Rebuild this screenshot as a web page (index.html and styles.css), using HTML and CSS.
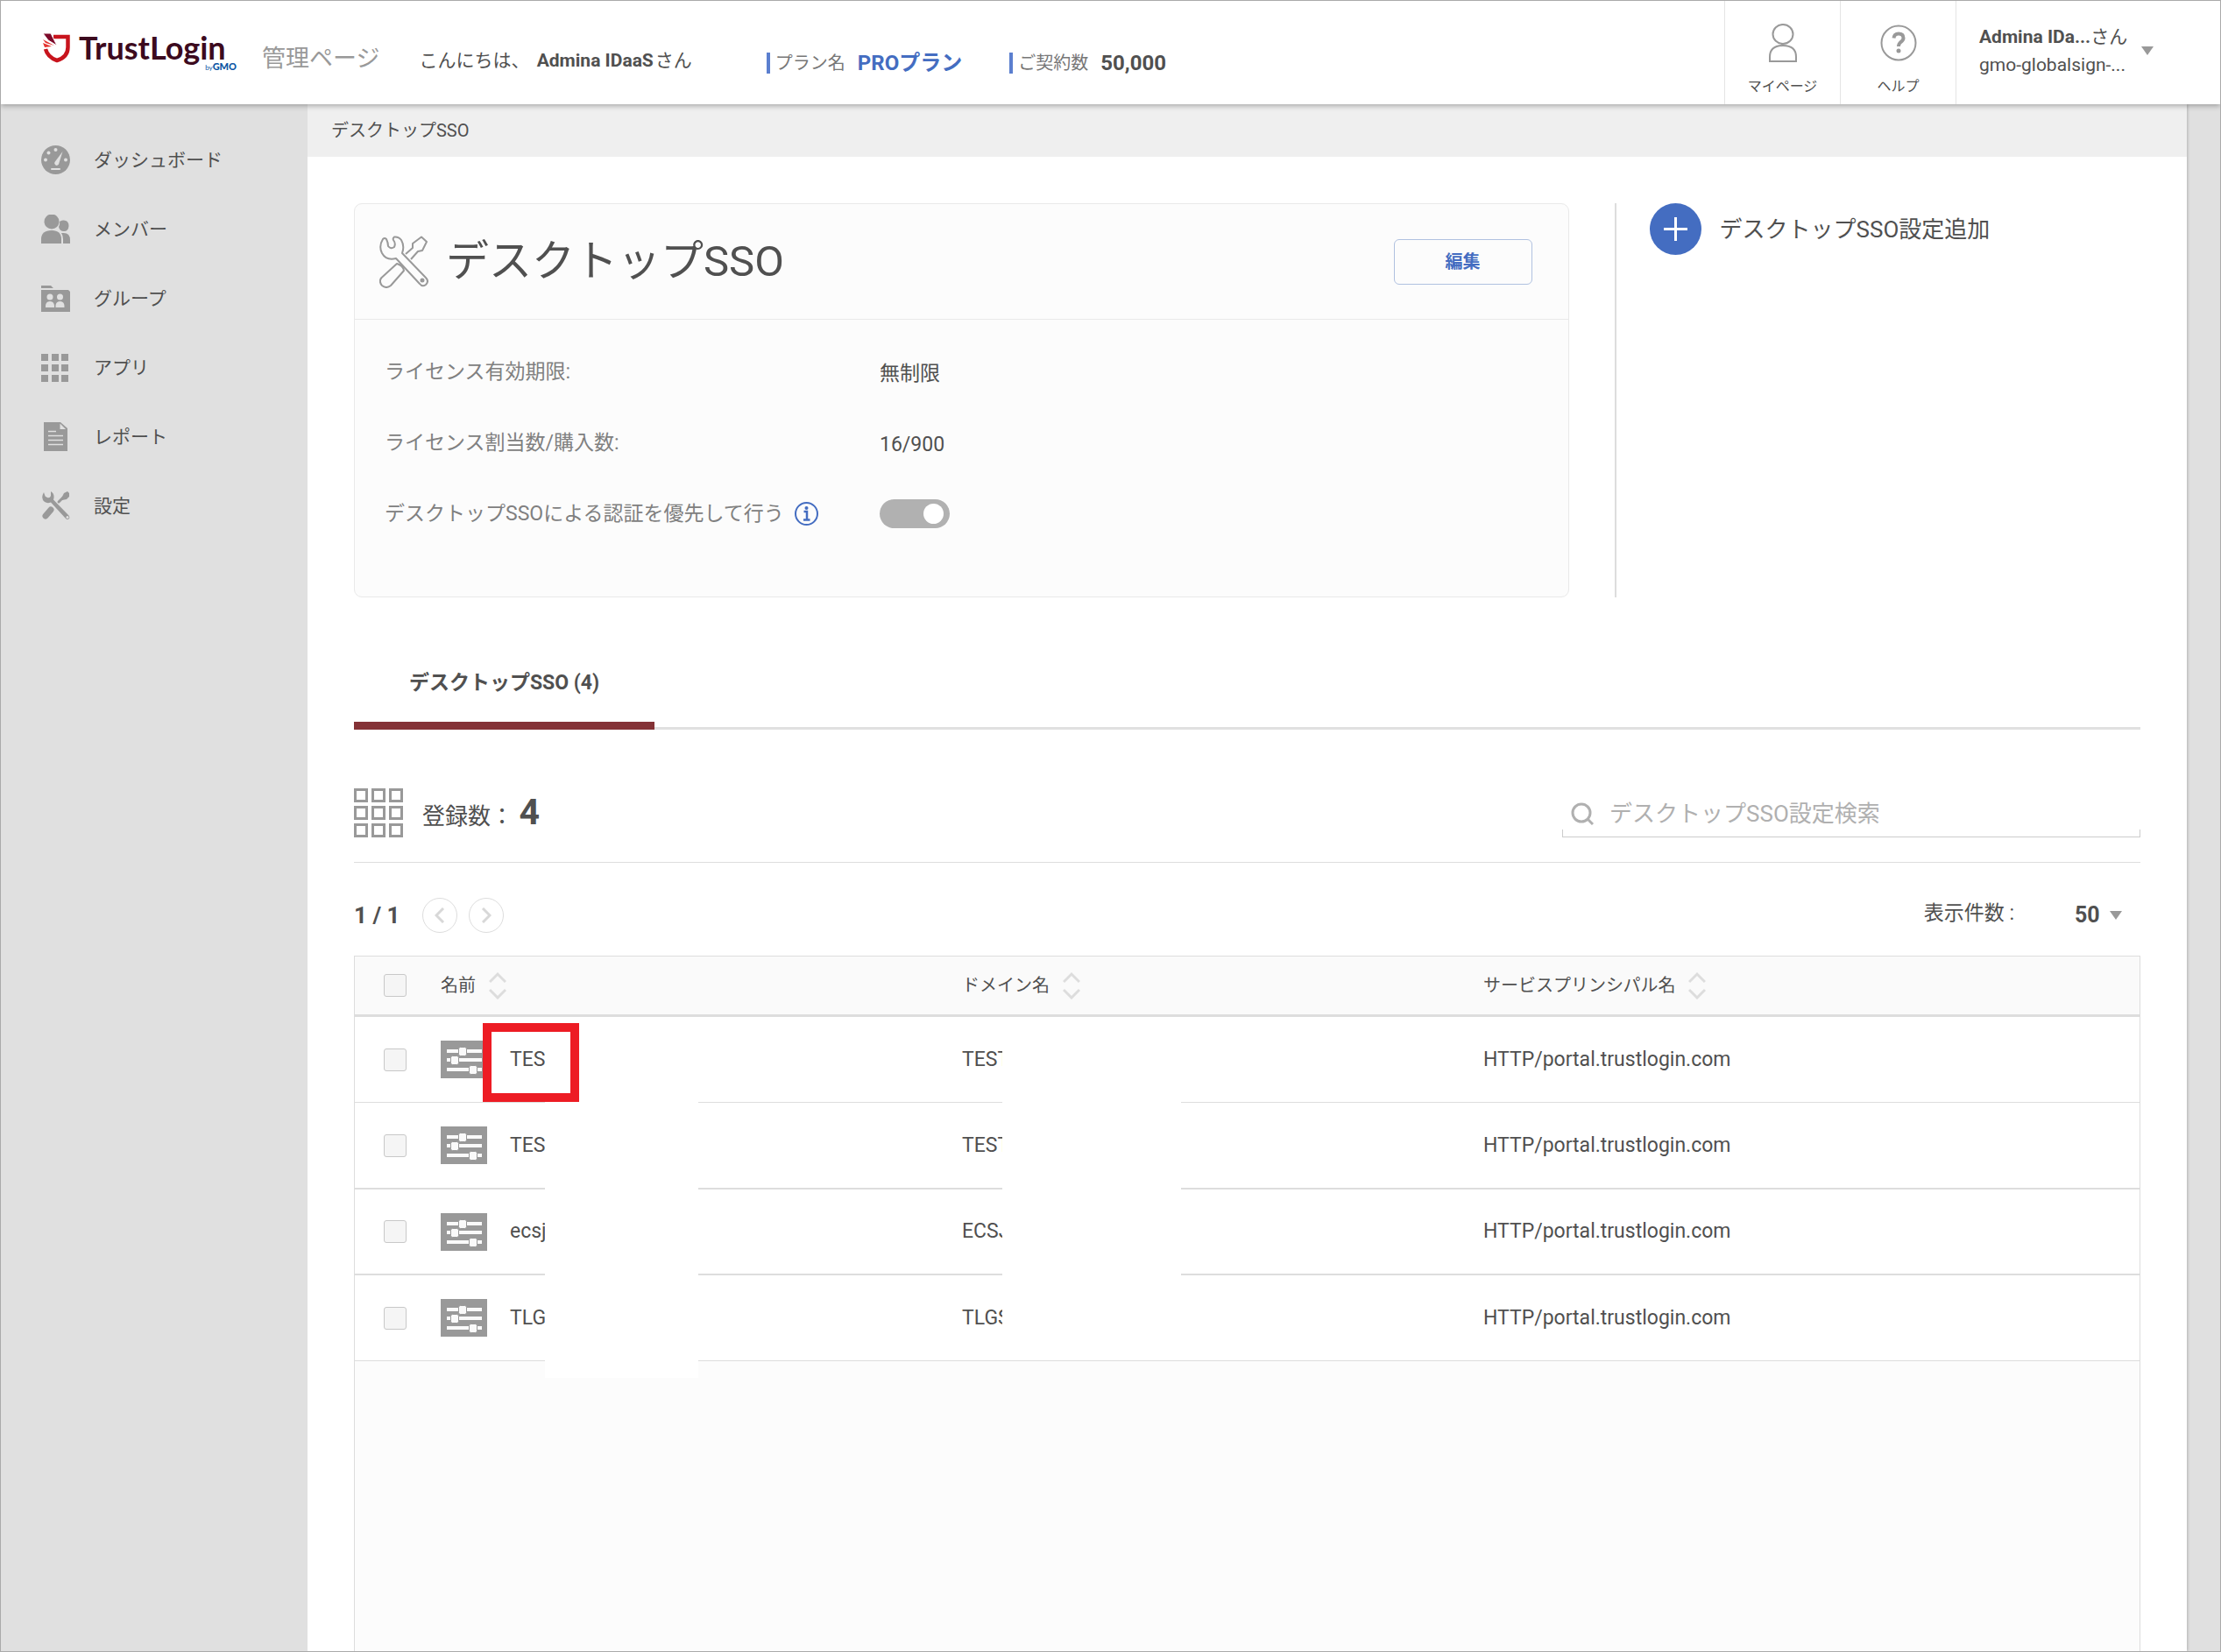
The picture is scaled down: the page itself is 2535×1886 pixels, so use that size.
FILE: index.html
```html
<!DOCTYPE html>
<html lang="ja">
<head>
  <meta charset="UTF-8">
  <meta name="viewport" content="width=device-width, initial-scale=1.0">
  <title>デスクトップSSO - TrustLogin 管理ページ</title>
  <link rel="stylesheet" href="styles.css">
</head>
<body>
  <header class="header">
    <a class="logo" href="#" aria-label="TrustLogin by GMO">
      <svg class="logo-mark" viewBox="0 0 31 34" width="31" height="34">
        <path d="M12 4H28.500V16C28.500 23 24 28.500 16 31C8.500 28.500 4.500 24 3 18" fill="none" stroke="#c8141d" stroke-width="4.500"/>
        <path d="M0 0L9 0L16 14L6 8Z" fill="#7d0a2a" stroke="#fff" stroke-width="1"/>
        <path d="M0 7L13 14L3 11ZM0 11L10 15L2 16Z" fill="#e5322e"/>
      </svg>
      <span class="logo-text">
        <span class="logo-name">TrustLogin</span>
        <span class="logo-sub"><small>by</small>GMO</span>
      </span>
    </a>
    <span class="site-name">管理ページ</span>
    <p class="greeting">こんにちは、 <strong>Admina IDaaS</strong>さん</p>
    <dl class="plan">
      <div class="plan-item">
        <dt>プラン名</dt>
        <dd class="blue">PROプラン</dd>
      </div>
      <div class="plan-item">
        <dt>ご契約数</dt>
        <dd>50,000</dd>
      </div>
    </dl>
    <nav class="header-menu">
      <a class="header-link" href="#">
        <svg viewBox="0 0 44 44" width="44" height="44" fill="none" stroke="#999" stroke-width="2">
          <ellipse cx="22" cy="12" rx="11.500" ry="11"/>
          <path d="M7 43V38Q7 25 22 25Q37 25 37 38V43Z"/>
        </svg>
        マイページ
      </a>
      <a class="header-link" href="#">
        <svg viewBox="0 0 44 44" width="44" height="44" fill="none" stroke="#999">
          <circle cx="22" cy="22" r="19.500" stroke-width="2"/>
          <path d="M16.500 16.500Q17 11.500 22 11.500Q27.500 11.500 27.500 16.500Q27.500 19 24.500 21Q22 23 22 26" stroke-width="4"/>
          <circle cx="22" cy="31" r="2.500" fill="#999" stroke="none"/>
        </svg>
        ヘルプ
      </a>
      <button class="user" type="button">
        <span class="user-text">
          <span><strong>Admina IDa...</strong>さん</span>
          <span>gmo-globalsign-...</span>
        </span>
        <span class="arrow"></span>
      </button>
    </nav>
  </header>

  <div class="layout">
    <nav class="sidebar">
      <a href="#">
        <svg viewBox="0 0 33 33" width="33" height="33">
          <circle cx="16.500" cy="16.500" r="16.500" fill="#999"/>
          <g fill="#e0e0e0">
            <circle cx="5" cy="16.500" r="2"/><circle cx="8.500" cy="8.500" r="2"/><circle cx="16.500" cy="5" r="2"/><circle cx="28" cy="16.500" r="2"/>
            <path d="M24.500 7L20 21.500Q18 24 16 22Q14.500 20.500 15.500 19Z"/>
            <rect x="11" y="26" width="11" height="2" rx="1"/>
          </g>
        </svg>
        ダッシュボード
      </a>
      <a href="#">
        <svg viewBox="0 0 33 33" width="33" height="33" fill="#999">
          <circle cx="12" cy="8" r="8.500"/>
          <path d="M0 33V28Q0 18 12 18Q23 18 23 28V33Z"/>
          <path d="M21 8Q23 6 26 6.500Q31.500 7 31.500 13Q31 19 26 19Q21 19 20 14Q21.500 11 21 8Z"/>
          <path d="M24 21Q33 20 33 29V33H25V28Q25 24 23 21Z"/>
        </svg>
        メンバー
      </a>
      <a href="#">
        <svg viewBox="0 0 33 33" width="33" height="33">
          <path d="M0 2H11L14 5H0ZM0 7H31L33 9V32H0Z" fill="#999"/>
          <g fill="#e0e0e0">
            <circle cx="10" cy="15" r="3.500"/><circle cx="21.500" cy="15" r="3.500"/>
            <path d="M5 27Q4.500 20 10 20Q15.500 20 15 27ZM16.500 27Q16 20 21.500 20Q27 20 26.500 27Z"/>
          </g>
        </svg>
        グループ
      </a>
      <a href="#">
        <svg viewBox="0 0 33 33" width="33" height="33" fill="#999">
          <path d="M0 1H8V9H0ZM12 1H20V9H12ZM23 1H31V9H23ZM0 13H8V21H0ZM12 13H20V21H12ZM23 13H31V21H23ZM0 25H8V33H0ZM12 25H20V33H12ZM23 25H31V33H23Z"/>
        </svg>
        アプリ
      </a>
      <a href="#">
        <svg viewBox="0 0 33 33" width="33" height="33">
          <path d="M3 0H22L30 7V33H3Z" fill="#999"/>
          <path d="M21.500 1.500V8H28" fill="#e0e0e0"/>
          <path d="M8 10.500H17M8 15.500H25M8 20.500H25M8 25.500H25" stroke="#e0e0e0" stroke-width="1.500"/>
        </svg>
        レポート
      </a>
      <a href="#">
        <svg viewBox="0 0 33 33" width="33" height="33">
          <path d="M5 28L11 21" stroke="#999" stroke-width="7" stroke-linecap="round"/>
          <path d="M20 12L25 7" stroke="#999" stroke-width="3" stroke-linecap="round"/>
          <path d="M23 8L26 2L30 0L32 2V6L29 9L24 10Z" fill="#999"/>
          <path d="M3 1Q-1 8 4 12Q7 14 11 12.500L28 31Q30 33 32 31Q33 29 31 27L14 9.500Q16 3 11 0V5Q10 8 7 7Q4 6 4 4Z" fill="#999"/>
          <circle cx="30" cy="29.500" r="1.500" fill="#e0e0e0"/>
        </svg>
        設定
      </a>
    </nav>

    <main class="main">
      <div class="breadcrumb">デスクトップSSO</div>

      <div class="content">
        <div class="top">
          <section class="card">
            <div class="card-head">
              <svg viewBox="0 0 56 60" width="56" height="60" fill="none" stroke="#999" stroke-width="2" stroke-linejoin="round">
                <path d="M20 32L2.500 48Q-1 52 3 57Q8 61 13 57L28 40Q27 34 20 32Z"/>
                <path d="M30 21L38 14L38 9L48 1.500L54 7L49 17L44 18L36 27"/>
                <path d="M4 4Q-1 12 3 20Q8 29 19 26L46 55Q49 59 53 56Q57 52 53 48L26 20Q29 12 25 5Q22 1 17 1.500Q15 3 16 5Q19 9 17 13Q13 16 10 12Q10 8 8 4Q6 2 4 4Z" fill="#fcfcfc"/>
                <circle cx="49" cy="51" r="1.500" fill="#999"/>
              </svg>
              <h1>デスクトップSSO</h1>
              <button class="edit" type="button">編集</button>
            </div>
            <div class="card-body">
              <div class="row">
                <span class="label">ライセンス有効期限:</span>
                <span class="value">無制限</span>
              </div>
              <div class="row">
                <span class="label">ライセンス割当数/購入数:</span>
                <span class="value">16/900</span>
              </div>
              <div class="row">
                <label class="label" for="prefer">デスクトップSSOによる認証を優先して行う
                  <svg viewBox="0 0 27 27" width="27" height="27" fill="none" stroke="#446dc1">
                    <circle cx="13.500" cy="13.500" r="12.500" stroke-width="2"/>
                    <path d="M10.500 11H14V20.500M10 20.500H17.500" stroke-width="2.500"/>
                    <circle cx="13.500" cy="7" r="2" fill="#446dc1" stroke="none"/>
                  </svg>
                </label>
                <input class="toggle" type="checkbox" id="prefer" checked>
              </div>
            </div>
          </section>

          <aside class="actions">
            <button class="add" type="button">
              <svg viewBox="0 0 59 59" width="59" height="59">
                <circle cx="29.500" cy="29.500" r="29.500" fill="#446dc1"/>
                <path d="M29.500 16V43M16 29.500H43" stroke="#fff" stroke-width="3"/>
              </svg>
              デスクトップSSO設定追加
            </button>
          </aside>
        </div>

        <div class="tabs">
          <a class="tab" href="#">デスクトップSSO (4)</a>
        </div>

        <div class="summary">
          <svg viewBox="0 0 56 56" width="56" height="56" fill="none" stroke="#999" stroke-width="3">
            <path d="M1.500 1.500H14.500V14.500H1.500ZM21.500 1.500H34.500V14.500H21.500ZM41.500 1.500H54.500V14.500H41.500ZM1.500 21.500H14.500V34.500H1.500ZM21.500 21.500H34.500V34.500H21.500ZM41.500 21.500H54.500V34.500H41.500ZM1.500 41.500H14.500V54.500H1.500ZM21.500 41.500H34.500V54.500H21.500ZM41.500 41.500H54.500V54.500H41.500Z"/>
          </svg>
          <p class="count">登録数： <strong>4</strong></p>
          <div class="search">
            <svg viewBox="0 0 26 26" width="26" height="26" fill="none" stroke="#b0b0b0" stroke-width="3">
              <circle cx="12" cy="12" r="10"/>
              <path d="M19 19L25 25"/>
            </svg>
            <input type="text" placeholder="デスクトップSSO設定検索" aria-label="デスクトップSSO設定検索">
          </div>
        </div>

        <div class="pager">
          <span class="page">1 / 1</span>
          <button class="page-btn" type="button" aria-label="前へ" disabled>
            <svg viewBox="0 0 12 18" width="12" height="18" fill="none" stroke="#d8d8d8" stroke-width="3"><path d="M10 1L2 9L10 17"/></svg>
          </button>
          <button class="page-btn" type="button" aria-label="次へ" disabled>
            <svg viewBox="0 0 12 18" width="12" height="18" fill="none" stroke="#d8d8d8" stroke-width="3"><path d="M2 1L10 9L2 17"/></svg>
          </button>
          <label class="per-page-label" for="perPage">表示件数 :</label>
          <div class="per-page">
            <select id="perPage">
              <option>50</option>
              <option>100</option>
            </select>
            <span class="arrow"></span>
          </div>
        </div>

        <div class="table-box">
          <table>
            <colgroup>
              <col class="col-check">
              <col class="col-name">
              <col class="col-domain">
              <col>
            </colgroup>
            <thead>
              <tr>
                <th><input class="check" type="checkbox" aria-label="すべて選択"></th>
                <th><span class="sort">名前 <svg viewBox="0 0 20 32" width="20" height="32"><path d="M1 12L10 3L19 12M1 21L10 30L19 21"/></svg></span></th>
                <th><span class="sort">ドメイン名 <svg viewBox="0 0 20 32" width="20" height="32"><path d="M1 12L10 3L19 12M1 21L10 30L19 21"/></svg></span></th>
                <th><span class="sort">サービスプリンシパル名 <svg viewBox="0 0 20 32" width="20" height="32"><path d="M1 12L10 3L19 12M1 21L10 30L19 21"/></svg></span></th>
              </tr>
            </thead>
            <tbody>
              <tr>
                <td><input class="check" type="checkbox" aria-label="TES"></td>
                <td class="name"><a href="#"><svg class="app-icon" viewBox="0 0 53 43" width="53" height="43"><use href="#sliders"/></svg>TES</a><span class="highlight"></span></td>
                <td class="domain">TEST</td>
                <td>HTTP/portal.trustlogin.com</td>
              </tr>
              <tr>
                <td><input class="check" type="checkbox" aria-label="TES"></td>
                <td class="name"><a href="#"><svg class="app-icon" viewBox="0 0 53 43" width="53" height="43"><use href="#sliders"/></svg>TES</a></td>
                <td class="domain">TEST</td>
                <td>HTTP/portal.trustlogin.com</td>
              </tr>
              <tr>
                <td><input class="check" type="checkbox" aria-label="ecsj"></td>
                <td class="name"><a href="#"><svg class="app-icon" viewBox="0 0 53 43" width="53" height="43"><use href="#sliders"/></svg>ecsj</a></td>
                <td class="domain">ECSJ</td>
                <td>HTTP/portal.trustlogin.com</td>
              </tr>
              <tr>
                <td><input class="check" type="checkbox" aria-label="TLG"></td>
                <td class="name"><a href="#"><svg class="app-icon" viewBox="0 0 53 43" width="53" height="43"><use href="#sliders"/></svg>TLG</a></td>
                <td class="domain">TLGS</td>
                <td>HTTP/portal.trustlogin.com</td>
              </tr>
            </tbody>
          </table>
        </div>
      </div>
    </main>
  </div>

  <svg class="defs" width="0" height="0" aria-hidden="true">
    <symbol id="sliders" viewBox="0 0 53 43">
      <rect width="53" height="43" fill="#999"/>
      <path d="M7 12H47M7 22H47M7 33H47" stroke="#fafafa" stroke-width="4"/>
      <g fill="#fafafa" stroke="#999" stroke-width="1">
        <rect x="20.500" y="7.500" width="9" height="10" rx="2"/>
        <rect x="11.500" y="17.500" width="9" height="10" rx="2"/>
        <rect x="32.500" y="28.500" width="9" height="10" rx="2"/>
      </g>
    </symbol>
  </svg>
</body>
</html>
```
FILE: styles.css
```css
* {
  margin: 0;
  padding: 0;
  box-sizing: border-box;
}

body {
  display: flex;
  flex-direction: column;
  min-height: 100vh;
  border: 1px solid #aaa;
  background-color: #e0e0e0;
  color: #505050;
  font-family: Roboto, "Noto Sans CJK JP", sans-serif;
  font-size: 23px;
  line-height: 32px;
}

a {
  color: inherit;
  text-decoration: none;
}

button {
  border: none;
  background: none;
  color: inherit;
  font: inherit;
  cursor: pointer;
}

strong {
  font-weight: 700;
}

svg {
  flex: none;
}

.defs {
  position: absolute;
}

.arrow {
  border: 7px solid transparent;
  border-top: 10px solid #999;
  border-bottom: none;
}

/* Header */
.header {
  position: relative;
  z-index: 1;
  display: flex;
  align-items: center;
  height: 118px;
  padding-left: 48px;
  background-color: #fff;
  box-shadow: 0 2px 6px rgba(0, 0, 0, 0.3);
  white-space: nowrap;
}

.logo {
  display: flex;
  gap: 10px;
  width: 221px;
}

.logo-text {
  display: flex;
  flex: 1;
  flex-direction: column;
}

.logo-name {
  color: #3c0a1e;
  font-family: Lato, sans-serif;
  font-size: 36px;
  font-weight: 700;
  line-height: 32px;
}

.logo-sub {
  align-self: flex-end;
  color: #0b56a4;
  font-family: Lato, sans-serif;
  font-size: 11px;
  font-weight: 900;
  line-height: 12px;
}

.logo-sub small {
  font-size: 8px;
  font-weight: 400;
}

.site-name {
  margin-top: 14px;
  margin-left: 29px;
  color: #999;
  font-size: 27px;
}

.greeting {
  margin-top: 17px;
  margin-left: 45px;
  font-size: 21px;
}

.greeting strong {
  margin: 0 2px 0 3px;
}

.plan {
  display: flex;
  gap: 54px;
  margin-top: 24px;
  margin-left: 85px;
}

.plan-item {
  display: flex;
  align-items: center;
  gap: 14px;
  height: 24px;
  padding-left: 6px;
  border-left: 4px solid #5b7fcf;
}

.plan dt {
  color: #777;
  font-size: 20px;
}

.plan dd {
  font-size: 24px;
  font-weight: 700;
}

.plan .blue {
  color: #446dc1;
}

.header-menu {
  display: flex;
  align-self: stretch;
  margin-left: auto;
}

.header-link {
  display: flex;
  flex-direction: column;
  align-items: center;
  gap: 12px;
  width: 132px;
  padding-top: 26px;
  border-left: 1px solid #e4e4e4;
  font-size: 16px;
  line-height: 32px;
}

.user {
  display: flex;
  align-items: center;
  gap: 16px;
  width: 302px;
  padding-bottom: 4px;
  padding-left: 26px;
  border-left: 1px solid #e4e4e4;
  font-size: 21px;
  text-align: left;
}

.user-text {
  display: flex;
  flex-direction: column;
}

/* Sidebar */
.layout {
  display: flex;
  flex: 1;
}

.sidebar {
  flex: none;
  width: 350px;
  padding-top: 24px;
}

.sidebar a {
  display: flex;
  align-items: center;
  gap: 27px;
  height: 79px;
  padding-left: 46px;
  font-size: 21px;
}

/* Main */
.main {
  display: flex;
  flex-direction: column;
  flex: 1;
  min-width: 0;
  margin-right: 38px;
  background-color: #fff;
  box-shadow: 1px 0 3px rgba(0, 0, 0, 0.2);
  clip-path: inset(0 -8px 0 0);
}

.breadcrumb {
  height: 60px;
  padding-left: 27px;
  background-color: #efefef;
  font-size: 20px;
  line-height: 60px;
}

.content {
  display: flex;
  flex-direction: column;
  flex: 1;
  padding: 53px 53px 0;
}

.top {
  display: flex;
}

.card {
  width: 68%;
  border: 1px solid #e9e9e9;
  border-radius: 9px;
  background-color: #fcfcfc;
}

.card-head {
  display: flex;
  align-items: center;
  gap: 20px;
  height: 132px;
  padding: 0 41px 0 28px;
  border-bottom: 1px solid #e9e9e9;
}

h1 {
  font-size: 49px;
  font-weight: 400;
}

.edit {
  width: 158px;
  height: 52px;
  margin-left: auto;
  border: 1px solid #b0c1e0;
  border-radius: 6px;
  color: #446dc1;
  font-size: 20px;
  font-weight: 700;
}

.card-body {
  padding: 19px 34px 54px;
}

.row {
  display: flex;
  align-items: center;
  height: 81px;
}

.label {
  display: flex;
  align-items: center;
  gap: 12px;
  width: 565px;
  color: #808080;
}

.value {
  padding-top: 5px;
}

.toggle {
  display: flex;
  align-items: center;
  justify-content: flex-end;
  width: 80px;
  height: 33px;
  padding: 0 7px;
  border-radius: 17px;
  background-color: #b1b1b1;
  appearance: none;
}

.toggle::before {
  content: "";
  width: 23px;
  height: 23px;
  border-radius: 50%;
  background-color: #fff;
}

.toggle:not(:checked) {
  justify-content: flex-start;
}

.actions {
  margin-left: 52px;
  padding-left: 38px;
  border-left: 2px solid #ddd;
}

.add {
  display: flex;
  align-items: center;
  gap: 21px;
  font-size: 26px;
}

/* Tabs */
.tabs {
  display: flex;
  height: 98px;
  margin-top: 53px;
  border-bottom: 3px solid #e0e0e0;
}

.tab {
  width: 343px;
  height: 98px;
  border-bottom: 9px solid #843236;
  font-weight: 700;
  line-height: 90px;
  text-align: center;
}

.summary {
  display: flex;
  align-items: center;
  height: 152px;
  padding-top: 38px;
  border-bottom: 1px solid #ddd;
}

.count {
  margin-left: 22px;
  padding-top: 3px;
  font-size: 26px;
}

.count strong {
  font-size: 41px;
}

/* only the lower edge of the field is boxed */
.search {
  display: flex;
  align-items: center;
  gap: 18px;
  width: 660px;
  height: 57px;
  margin-left: auto;
  padding-top: 3px;
  padding-left: 10px;
  border-bottom: 1px solid #ccc;
  background:
    linear-gradient(#ccc, #ccc) left bottom / 1px 8px no-repeat,
    linear-gradient(#ccc, #ccc) right bottom / 1px 8px no-repeat;
}

.search input {
  flex: 1;
  border: none;
  outline: none;
  background: none;
  color: inherit;
  font: inherit;
  font-size: 26px;
}

.search input::placeholder {
  color: #b0b0b0;
}

.pager {
  display: flex;
  align-items: center;
  gap: 13px;
  height: 106px;
  padding-top: 14px;
}

.page {
  margin-right: 13px;
  font-size: 26px;
  font-weight: 700;
}

.page-btn {
  display: flex;
  align-items: center;
  justify-content: center;
  width: 40px;
  height: 40px;
  border: 1px solid #ddd;
  border-radius: 50%;
}

.per-page-label {
  margin-left: auto;
  padding-bottom: 4px;
}

.per-page {
  display: flex;
  align-items: center;
  gap: 10px;
  width: 131px;
  padding-left: 56px;
}

.per-page select {
  width: 30px;
  border: none;
  background: none;
  color: inherit;
  font: inherit;
  font-size: 25px;
  font-weight: 700;
  appearance: none;
}

/* Table */
.table-box {
  flex: 1;
  border: 1px solid #ddd;
  border-bottom: none;
  background-color: #fcfcfc;
}

table {
  width: 100%;
  border-spacing: 0;
  table-layout: fixed;
  background-color: #fff;
}

.col-check {
  width: 98px;
}

.col-name,
.col-domain {
  width: 595px;
}

th {
  height: 69px;
  border-bottom: 3px solid #ddd;
  background-color: #fafafa;
  font-size: 20px;
  font-weight: 400;
  text-align: left;
}

td {
  height: 98px;
  border-bottom: 1px solid #ddd;
  vertical-align: middle;
}

tr:nth-child(2) td,
tr:nth-child(3) td {
  border-bottom-width: 2px;
}

tr:nth-child(2) td {
  height: 99px;
}

th:first-child,
td:first-child {
  padding-left: 33px;
}

.sort {
  display: flex;
  align-items: center;
  gap: 15px;
}

.sort path {
  fill: none;
  stroke: #ddd;
  stroke-width: 3px;
}

.check {
  display: block;
  width: 26px;
  height: 26px;
  border: 1px solid #c8c8c8;
  border-radius: 3px;
  background-color: #f5f5f5;
  appearance: none;
}

.name a {
  display: flex;
  align-items: center;
  gap: 26px;
}

.name,
.domain {
  position: relative;
}

.name::after,
.domain::after {
  content: "";
  position: absolute;
  top: 0;
  bottom: -2px;
  background-color: #fff;
}

.name::after {
  left: 119px;
  width: 175px;
}

.domain::after {
  left: 46px;
  width: 204px;
}

tr:last-child .name::after {
  bottom: -20px;
}

tr:last-child .domain::after {
  bottom: 0;
}

.highlight {
  position: absolute;
  z-index: 1;
  top: 7px;
  left: 48px;
  width: 110px;
  height: 90px;
  border: 10px solid #ed1c24;
}
```
